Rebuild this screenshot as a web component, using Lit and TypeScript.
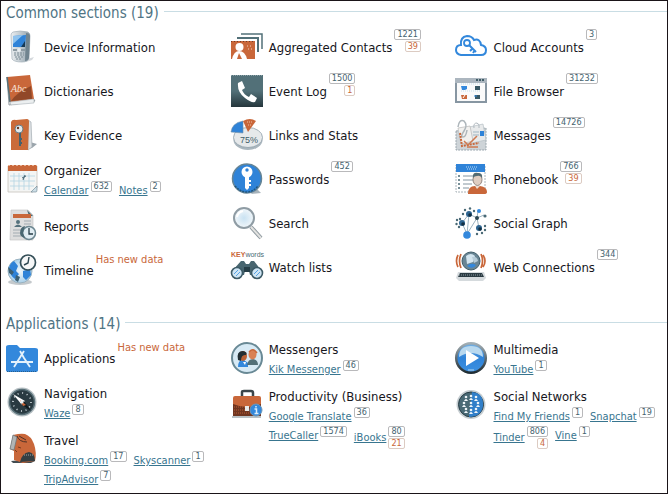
import { LitElement, html, svg, css, nothing } from "lit";
import { customElement } from "lit/decorators.js";

interface Counts {
  total?: string;
  fresh?: string;
}
interface AppLink extends Counts {
  name: string;
}
interface Entry extends Counts {
  icon: string;
  title: string;
  note?: string;
  links?: AppLink[];
}
interface Section {
  name: string;
  count: number;
  columns: Entry[][];
}

const icons: Record<string, unknown> = {
  device: svg`
    <path d="M18 29 L28 26 L26 29 L20 31 Z" fill="#d5d9dd"/>
    <path d="M7 1 Q14 -1 22 1 Q24 2 24 5 L23 27 Q22 31 16 31 Q8 31 6 28 L5 4 Q5 2 7 1Z" fill="url(#steel)" stroke="#a3b0b9" stroke-width=".7"/>
    <path d="M20 2 Q24 2 24 5 L23 27 Q22 30 19 30Z" fill="#70848f"/>
    <path d="M7 5 L20 4 L19 16 L7 16Z" fill="#2f83d8"/>
    <path d="M7 5 L17 4 L7 13Z" fill="#8fc3ee"/>
    <path d="M15 16 L19 10 L19 16Z" fill="#173a55"/>
    <path d="M7 18 H19 V20 H7Z" fill="#8d9ba3"/><circle cx="13" cy="19" r="2" fill="#e8edf0"/>
    <path d="M8 22 H18 M8 24 H18 M9 26 H17 M10 28 H16" stroke="#7b8b94" stroke-dasharray="2 1"/>`,
  dictionary: svg`
    <path d="M1 2 L3 30 L29 26 L26 22Z" fill="#e6e6e6" stroke="#9aa0a5"/>
    <path d="M1 2 L24 0 L28 24 L4 27Z" fill="#c9673a"/>
    <path d="M25 11 L26 24 L5 26 Q10 18 25 11Z" fill="#6d331d" opacity=".6"/>
    <path d="M1 2 L4 27" stroke="#567078" stroke-width="1.500"/>
    <path d="M4 27 L28 24 L28 28 L5 30Z" fill="#eceff0" stroke="#9ba5aa" stroke-width=".5"/>
    <text x="5" y="17" class="abc">Abc</text>`,
  key: svg`
    <path d="M24 23 L31 25 L26 29 L22 30Z" fill="#9aa4ab"/>
    <path d="M22 1 L25 3 L26 28 L22 31Z" fill="#dde1e4" stroke="#a4acb2" stroke-width=".7"/>
    <path d="M5 3 Q6 0 10 1 L21 0 Q23 0 23 3 L22 31 H5Z" fill="#ca6b3a"/>
    <circle cx="13" cy="10" r="4" fill="#e2e8eb" stroke="#6a7d86"/><circle cx="12" cy="9" r="1.200" fill="#6a3a22"/>
    <path d="M14 14 V27 M14 20 H16 M14 24 H16" stroke="#45616d" stroke-width="2"/>`,
  calendar: svg`
    <path d="M2 3 H31 V25 L27 29 H2Z" fill="#f4f5f4" stroke="#c6c1bb" stroke-width=".8"/>
    <path d="M2 2 H31 V8 H2Z" fill="#c9673a"/><path d="M2 2.500 H31" stroke="#e9b193" stroke-dasharray="2 2"/>
    <path d="M4 13 H29 M4 18 H29 M4 23 H28 M8 10 V27 M13 10 V27 M18 10 V27 M23 10 V27" stroke="#b4d4e3" stroke-width=".8"/>
    <path d="M16 15 L20 13 M17 17 L19 12" stroke="#486673"/>
    <path d="M31 23 L25 29 H30 Q31 29 31 27Z" fill="#cfe0e8" stroke="#68828d" stroke-width=".6"/>`,
  report: svg`
    <path d="M5 0 H22 L27 5 V30 H4Z" fill="#dedede" stroke="#bfc0c1" stroke-width=".6"/>
    <path d="M21 0 L27 6 H23Z" fill="#4c6c74"/>
    <path d="M7 4 H25 V8 H7Z" fill="#c9673a"/>
    <circle cx="12" cy="12" r="2" fill="#55727d"/><path d="M8 17 Q12 12 16 17Z" fill="#55727d"/>
    <path d="M18 11 H25 M18 14 H25 M7 20 H15 M7 23 H14 M7 26 H15" stroke="#a2abb1"/>
    <circle cx="23" cy="23" r="6.500" fill="#e1edf3" stroke="#6d8791" stroke-width="1.500"/>
    <path d="M23 18 V24 H27" fill="none" stroke="#263d47" stroke-width="1.300"/>
    <path d="M14 23 Q14 17 19 16 L17 23 L19 28 Q14 27 14 23Z" fill="#4a6872"/>`,
  timeline: svg`
    <ellipse cx="14" cy="28" rx="12" ry="3" fill="#c4c9cc"/>
    <circle cx="14" cy="17" r="12" fill="url(#globe)" stroke="#9ab2c0"/>
    <path d="M3 14 Q4 9 8 7 L12 12 L10 17 L13 20 L9 25 Q4 22 3 14Z M17 17 L24 15 L25 21 L20 26 L17 23Z" fill="#2f83d8"/>
    <path d="M2 13 L8 18 L6 21 L3 19Z M10 21 L14 23 L12 28 L9 26Z" fill="#3d6073"/>
    <circle cx="22" cy="8.500" r="7.500" fill="#f6f7f7" stroke="#354f58" stroke-width="1.700"/>
    <path d="M23 3 L22 9 L18 11" fill="none" stroke="#2c4650" stroke-width="1.400"/>`,
  contacts: svg`
    <path d="M10 3 H31 V18" fill="none" stroke="#527078" stroke-width="1.500"/>
    <path d="M6 7 H27 V21" fill="none" stroke="#527078" stroke-width="2"/>
    <path d="M0 10 H24 V28 H0Z" fill="#c9673a"/><path d="M0 10.500 H24" stroke="#703c29" stroke-dasharray="1 2"/>
    <circle cx="8.500" cy="16" r="4" fill="#fff"/><path d="M1 28 Q3 20 8 20 Q14 20 16 28Z" fill="#fff"/>
    <path d="M6 28 L8 22 L11 28Z" fill="#c9673a"/>
    <path d="M16 15 H22 M17 18 H22" stroke="#f1cdb9" stroke-dasharray="1 2"/>`,
  phone: svg`
    <path d="M0 0 H32 V32 H0Z" fill="url(#slate)"/><path d="M0 .5 H32" stroke="#8ca2a8" stroke-dasharray="1 1"/>
    <path d="M7 8 L11 6 L14 13 L11 15 Q13 20 18 22 L20 19 L26 23 L24 27 Q20 28 14 23 Q6 17 7 8Z" fill="#fff"/>`,
  stats: svg`
    <ellipse cx="17" cy="21" rx="14.500" ry="10" fill="#aab6be"/>
    <ellipse cx="17" cy="18.500" rx="14.500" ry="10" fill="#e6e9eb" stroke="#8fa0aa" stroke-width=".8"/>
    <path d="M12 14 L0 13 Q1 4 12 2Z" fill="#2f83d8" stroke="#7391a8" stroke-width=".6"/>
    <path d="M17 13 L12 2 Q19 -2 25 2Z" fill="#c9673a"/>
    <path d="M16 3 H22 M17 6 H21" stroke="#eec0a7" stroke-dasharray="1 1"/>
    <text x="9" y="24" class="percent">75%</text>`,
  password: svg`
    <path d="M25 25 L30 30 L20 31Z" fill="#a6b2ba"/>
    <circle cx="16" cy="15.500" r="14.500" fill="#2f83d8" stroke="#658495" stroke-width="1.500"/>
    <path d="M4 23 Q9 29 16 29 Q22 29 27 23" fill="none" stroke="#1f5680" stroke-width="1.500" stroke-dasharray="2 1"/>
    <circle cx="16" cy="9" r="5.500" fill="#fff"/><circle cx="16" cy="7" r="1.700" fill="#2f83d8"/>
    <path d="M14 13 H18 V25 L16 27 L14 25Z" fill="#fff"/><path d="M18 18 H20 M18 22 H20" stroke="#fff" stroke-width="2"/>`,
  search: svg`
    <path d="M20 20 L30 31" stroke="#8d989e" stroke-width="4"/><path d="M20 20 L30 31" stroke="#e2e2e0" stroke-width="2"/>
    <circle cx="13" cy="11" r="10" fill="url(#lens)" stroke="#8f9ca4" stroke-width="2"/>
    <path d="M6 10 Q7 5 12 4" fill="none" stroke="#fff" stroke-width="2"/>`,
  watch: svg`
    <text x="0" y="6" class="keyword"><tspan class="hot">KEY</tspan>words</text>
    <path d="M2 19 L10 10 L13 10 L15 13 H18 L20 10 H23 L30 19 V24 H19 L18 20 H14 L13 24 H2Z" fill="#486670"/>
    <path d="M13 16 H19 V21 H13Z" fill="#263e47"/>
    <circle cx="6" cy="22" r="5.500" fill="#cfe5f4" stroke="#3c5a66" stroke-width="1.600"/>
    <circle cx="26" cy="22" r="5.500" fill="#cfe5f4" stroke="#3c5a66" stroke-width="1.600"/>
    <path d="M3 23 L7 19 M5 25 L9 21 M23 23 L27 19 M25 25 L29 21" stroke="#55a2e4"/>`,
  cloud: svg`
    <path d="M6 24 Q1 23 1 19 Q1 14 6 14 Q5 6 12 5 Q17 5 19 9 Q25 7 26 14 Q31 15 31 19 Q31 24 26 24Z" fill="#fff" stroke="#3388dc" stroke-width="2"/>
    <circle cx="12" cy="12" r="3" fill="none" stroke="#3388dc" stroke-width="1.800"/>
    <path d="M14 14 L21 21 M17 18 L15 20 M20 19 L18 22" stroke="#3388dc" stroke-width="2"/>`,
  browser: svg`
    <path d="M0 3 H32 V28 H0Z" fill="#8796a2"/><path d="M0 3 H32 V8 H0Z" fill="#acb6bf"/>
    <path d="M21 5 H30" stroke="#3f5c66" stroke-width="2" stroke-dasharray="2 1"/>
    <path d="M2 8 H30 V26 H2Z" fill="#fafafa"/><path d="M6 9 H26 M6 16 H26" stroke="#c5dfeb" stroke-dasharray="1 1"/>
    <path d="M6 11 H12 V14 L10 15 H7Z" fill="#3388dc"/><path d="M20 11 H25 V15 H20Z M20 20 H25 V24 H20Z" fill="#395864"/>
    <path d="M6 20 H12 V24 H7Z" fill="#c9673a"/><path d="M8 23 L10 20" stroke="#fff"/><path d="M19 21 H22" stroke="#3388dc"/>`,
  messages: svg`
    <path d="M1 12 L31 9 V31 H1Z" fill="#ced4d8" stroke="#9aa6ad" stroke-dasharray="2 1"/>
    <path d="M10 9 L28 5 L31 21 L12 25Z" fill="#e8eaeb" stroke="#b6c0c6" stroke-width=".7"/>
    <path d="M3 9 L15 7 L18 22 L6 25Z" fill="#f2f1ef" stroke="#b8b8b7" stroke-width=".7"/>
    <path d="M3 8 Q4 0 9 2 Q13 6 9 12 Q5 18 8 18 Q11 18 12 11" fill="none" stroke="#aeb6bb" stroke-width="1.500"/>
    <path d="M19 9 Q18 4 22 4 Q25 5 24 9" fill="none" stroke="#b0b8be"/>
    <path d="M5 14 L7 27 L24 24" fill="none" stroke="#c9673a" stroke-width="2" stroke-dasharray="2 1"/>
    <path d="M9 22 L13 26 L22 17 M12 28 H23" fill="none" stroke="#ce7950" stroke-width="1.500"/>
    <path d="M25 12 H29 V17 H25Z" fill="#2f83d8"/><path d="M18 13 H24 M18 16 H24" stroke="#9fb5c2"/>`,
  phonebook: svg`
    <path d="M1 2 H30 V29 H1Z" fill="#fff" stroke="#aab4ba" stroke-dasharray="2 1"/>
    <path d="M1 1 H30 V9 H1Z" fill="#2f83d8"/><path d="M11 4 H23 M12 6 H22" stroke="#bddcf3" stroke-dasharray="1 1"/>
    <path d="M3 13 H5 M3 17 H5 M3 21 H5 M3 25 H5" stroke="#4b6b75" stroke-width="1.500"/>
    <path d="M8 13 H19 M8 17 H18 M8 21 H17 M8 25 H14" stroke="#8495a1"/>
    <path d="M13 31 Q13 23 20 23 H25 Q32 24 32 29 Q32 31 29 31Z" fill="#c9673a"/>
    <ellipse cx="22.500" cy="16.500" rx="4.500" ry="6" fill="#dfcdc2" stroke="#7b6d67" stroke-width=".8"/>
    <path d="M18 15 Q17 9 23 10 Q28 10 27 15 Q25 12 22 13 Q19 13 18 15Z" fill="#536b73"/><path d="M20 23 L22 26 L25 23Z" fill="#efdcd0"/>`,
  graph: svg`
    <path d="M14 7 L22 11 L29 8 M22 11 L24 21 M22 11 L12 27 M14 7 L12 27 M14 7 L7 16 L12 27 M22 11 L23 4" fill="none" stroke="#9db3c0"/>
    <circle cx="14" cy="7" r="3" fill="#2e6591"/><circle cx="7" cy="16" r="3" fill="#2e6591"/><circle cx="24" cy="21" r="3" fill="#2e6591"/>
    <circle cx="15" cy="8" r="1.800" fill="#132f42"/><circle cx="8" cy="17" r="1.800" fill="#132f42"/><circle cx="25" cy="22" r="1.800" fill="#132f42"/>
    <circle cx="12" cy="28" r="3.800" fill="#3388dc"/><circle cx="22" cy="11" r="2" fill="#2b4651"/><circle cx="24" cy="4" r="2" fill="#3388dc"/>
    <g fill="#496975"><circle cx="8" cy="7" r="1.200"/><circle cx="10" cy="3" r="1.200"/><circle cx="15" cy="1.500" r="1.200"/><circle cx="19" cy="4" r="1.200"/><circle cx="2" cy="13" r="1.200"/><circle cx="1.500" cy="17" r="1.200"/><circle cx="4" cy="20" r="1.200"/><circle cx="30" cy="9" r="1.600"/><circle cx="30" cy="19" r="1.200"/><circle cx="30" cy="23" r="1.200"/><circle cx="22" cy="27" r="1.200"/><circle cx="27" cy="26" r="1.200"/><circle cx="5" cy="12" r="1.200"/></g>`,
  web: svg`
    <path d="M3 21 H29 L31 27 L28 30 H4 L1 27Z" fill="#d5dadd"/>
    <path d="M5 22 H27 L29 26 H3Z" fill="#2b3b42"/><path d="M4 24 H28" stroke="#8e9da5" stroke-dasharray="1 1"/>
    <circle cx="16" cy="10" r="9" fill="#688594" stroke="#405e6a"/>
    <path d="M11 5 Q16 1 20 5 L18 11 L12 13Z" fill="#d3e5ef"/><path d="M12 15 Q16 11 21 14 Q18 19 12 15Z" fill="#3388dc"/>
    <path d="M17 6 Q22 5 23 10 L19 12Z" fill="#b6ccd8"/>
    <path d="M6 3 Q3 10 6 17 M3 4 Q0 10 3 16 M26 3 Q29 10 26 17 M28 4 Q32 10 28 16" fill="none" stroke="#c9673a" stroke-width="1.700"/>`,
  folder: svg`
    <path d="M0 5 Q0 3 3 3 H11 L14 6 H29 Q32 6 32 8 V28 Q32 30 29 30 H3 Q0 30 0 28Z" fill="#3388dc"/>
    <path d="M1 29.500 H31" stroke="#28608f" stroke-dasharray="1 1"/>
    <path d="M14 9 L18 16 L24 25 M18 9 L8 25 M5 20 H27" fill="none" stroke="#e4f2fc" stroke-width="1.800"/>`,
  compass: svg`
    <circle cx="16" cy="16" r="14.500" fill="#b7c0c4"/><circle cx="16" cy="16" r="12.500" fill="#293a41" stroke="#576e76" stroke-width="1.500"/>
    <circle cx="16" cy="16" r="9" fill="none" stroke="#dfe8ec" stroke-width="1.500" stroke-dasharray="1 3.700"/>
    <path d="M7 8 L19 15 L16 19Z" fill="#fff"/><path d="M25 25 L18 15 L15 18Z" fill="#10191d"/>
    <path d="M14 14 L20 19 L17 20Z" fill="#c9673a"/><circle cx="16" cy="16" r="1.500" fill="#e8eff2"/>`,
  backpack: svg`
    <path d="M5 28 L17 27 L29 28 L25 30 H7Z" fill="#424d52"/>
    <path d="M7 2 Q15 0 19 1 Q25 3 28 11 Q31 20 29 28 L17 30 L8 27 L8 18 L4 16Z" fill="#c9673a"/>
    <path d="M7 2 L11 4 L8 17 L4 16Z" fill="#b1b4b5" stroke="#65767c" stroke-width=".7"/>
    <path d="M11 3 Q13 9 21 9 M13 3 L20 7" fill="none" stroke="#4d3026"/>
    <path d="M14 29 Q16 20 23 19 Q29 20 29 28Z" fill="#343f43"/><path d="M18 22 H27" stroke="#a3a6a5" stroke-dasharray="1 1"/>
    <path d="M9 17 L11 19 M12 14 L15 15" stroke="#793b21"/>`,
  messengers: svg`
    <circle cx="16" cy="16" r="15" fill="#d7eaf5" stroke="#698995" stroke-width="2"/>
    <path d="M7 25 Q7 17 13 18 L17 21 V25Z" fill="#3388dc"/><path d="M16 23 Q17 17 22 17 Q27 18 27 23Z" fill="#527078"/>
    <ellipse cx="12" cy="14" rx="4" ry="5" fill="#b96136"/><path d="M7 18 Q5 9 12 9 Q17 10 15 13 Q10 12 10 19Z" fill="#222f34"/>
    <ellipse cx="21.500" cy="12.500" rx="4" ry="5" fill="#d98155"/><path d="M18 10 Q22 5 26 11" fill="none" stroke="#c9673a" stroke-width="1.500"/>
    <path d="M12 20 L14 23 L15 20" fill="#fff"/>`,
  briefcase: svg`
    <path d="M1 27 H30 V29 H1Z" fill="#b9c1c5"/><path d="M11 7 V3 Q11 2 13 2 H20 Q22 2 22 4 V7" fill="none" stroke="#3b4549" stroke-width="2.500"/>
    <path d="M2 9 Q2 7 4 7 H28 Q30 7 30 9 V27 H2Z" fill="#c9673a"/><path d="M2 15 Q16 21 30 15 V27 H2Z" fill="#6f3520"/>
    <path d="M3 18 H29 M3 21 H29 M3 24 H29" stroke="#b75d34" stroke-dasharray="1 1"/>
    <path d="M14 17 H18 V22 H14Z" fill="#e7e9e9"/><circle cx="25" cy="21" r="6" fill="#3388dc" stroke="#6f98b8"/>
    <path d="M25 17 V18.500 M23.500 20 H25.500 V24 M23.500 24.500 H27.500" fill="none" stroke="#d9ecfa" stroke-width="1.500"/>`,
  multimedia: svg`
    <circle cx="16" cy="16" r="14.800" fill="url(#play)" stroke="url(#rim)" stroke-width="2.500"/>
    <path d="M4 15 Q4 4 16 4 Q28 4 28 15 Q16 7 4 15Z" fill="#b9d9ef"/>
    <path d="M11 8 L24 16 L11 24Z" fill="#fff"/><path d="M13 28 H19" stroke="#b5d6ee"/>`,
  social: svg`
    <circle cx="16" cy="15.500" r="14.500" fill="#c5cdd1"/><circle cx="16" cy="15.500" r="12.500" fill="#496975" stroke="#293d45"/>
    <path d="M17 3 Q29 4 28 17 Q26 28 14 28Z" fill="#317fc9"/>
    <g fill="#eef5f9">${[
      [11, 8], [16, 7], [21, 8],
      [9, 14], [16, 14], [23, 14],
      [11, 20], [16, 21], [21, 20],
    ].map(([x, y]) => svg`<circle cx=${x} cy=${y} r="1.300"/><path d="M${x - 2} ${y + 4} Q${x} ${y} ${x + 2} ${y + 4}Z"/>`)}</g>`,
};

const sections: Section[] = [
  {
    name: "Common sections",
    count: 19,
    columns: [
      [
        { icon: "device", title: "Device Information" },
        { icon: "dictionary", title: "Dictionaries" },
        { icon: "key", title: "Key Evidence" },
        {
          icon: "calendar",
          title: "Organizer",
          links: [{ name: "Calendar", total: "632" }, { name: "Notes", total: "2" }],
        },
        { icon: "report", title: "Reports" },
        { icon: "timeline", title: "Timeline", note: "Has new data" },
      ],
      [
        { icon: "contacts", title: "Aggregated Contacts", total: "1221", fresh: "39" },
        { icon: "phone", title: "Event Log", total: "1500", fresh: "1" },
        { icon: "stats", title: "Links and Stats" },
        { icon: "password", title: "Passwords", total: "452" },
        { icon: "search", title: "Search" },
        { icon: "watch", title: "Watch lists" },
      ],
      [
        { icon: "cloud", title: "Cloud Accounts", total: "3" },
        { icon: "browser", title: "File Browser", total: "31232" },
        { icon: "messages", title: "Messages", total: "14726" },
        { icon: "phonebook", title: "Phonebook", total: "766", fresh: "39" },
        { icon: "graph", title: "Social Graph" },
        { icon: "web", title: "Web Connections", total: "344" },
      ],
    ],
  },
  {
    name: "Applications",
    count: 14,
    columns: [
      [
        { icon: "folder", title: "Applications", note: "Has new data" },
        { icon: "compass", title: "Navigation", links: [{ name: "Waze", total: "8" }] },
        {
          icon: "backpack",
          title: "Travel",
          links: [
            { name: "Booking.com", total: "17" },
            { name: "Skyscanner", total: "1" },
            { name: "TripAdvisor", total: "7" },
          ],
        },
      ],
      [
        { icon: "messengers", title: "Messengers", links: [{ name: "Kik Messenger", total: "46" }] },
        {
          icon: "briefcase",
          title: "Productivity (Business)",
          links: [
            { name: "Google Translate", total: "36" },
            { name: "TrueCaller", total: "1574" },
            { name: "iBooks", total: "80", fresh: "21" },
          ],
        },
      ],
      [
        { icon: "multimedia", title: "Multimedia", links: [{ name: "YouTube", total: "1" }] },
        {
          icon: "social",
          title: "Social Networks",
          links: [
            { name: "Find My Friends", total: "1" },
            { name: "Snapchat", total: "19" },
            { name: "Tinder", total: "806", fresh: "4" },
            { name: "Vine", total: "1" },
          ],
        },
      ],
    ],
  },
];

@customElement("app-root")
export class AppRoot extends LitElement {
  static styles = css`
    :host {
      display: block;
      font-family: "DejaVu Sans Condensed", "DejaVu Sans", sans-serif;
      color: #16161c;
    }
    .page {
      box-sizing: border-box;
      min-height: 100vh;
      border: 1px solid #1a1418;
      padding-left: 5px;
      background: #fff;
    }
    .defs {
      position: absolute;
      width: 0;
      height: 0;
    }
    .section {
      padding-bottom: 20px;
    }
    .section:last-child {
      padding-bottom: 0;
    }
    .heading {
      display: flex;
      align-items: center;
      gap: 5px;
      height: 24px;
      margin: 0;
      font-size: 15px;
      font-weight: 400;
      line-height: 24px;
      white-space: nowrap;
      color: #4f7484;
    }
    .heading::after {
      content: "";
      flex: 1;
      height: 1px;
      margin-bottom: 3px;
      background: #c9dde4;
    }
    .columns {
      display: grid;
      grid-template-columns: 34% 34% 1fr;
    }
    .column {
      margin: 0;
      padding: 0 8px 0 0;
      list-style: none;
    }
    .entry {
      display: flex;
      gap: 6px;
      min-height: 44px;
    }
    .icon {
      flex: none;
      width: 32px;
      height: 32px;
      margin-top: 6px;
      overflow: visible;
    }
    .title-row {
      display: flex;
      gap: 2px;
    }
    .title {
      margin: 0;
      padding-top: 2px;
      font-size: 13px;
      font-weight: 400;
      line-height: 42px;
      white-space: nowrap;
    }
    .with-links .title {
      padding-top: 4px;
      line-height: 20px;
    }
    .title-row .counts {
      margin-top: 4px;
    }
    .note {
      padding-top: 4px;
      font-size: 11px;
      line-height: 16px;
      white-space: nowrap;
      color: #c9673a;
    }
    .links {
      display: flex;
      flex-wrap: wrap;
      column-gap: 7px;
      margin: 0;
      padding: 0 0 4px;
      list-style: none;
    }
    .link-item {
      display: flex;
      align-items: flex-start;
      gap: 2px;
      min-height: 19px;
    }
    .link {
      font-size: 11px;
      line-height: 19px;
      white-space: nowrap;
      color: #38758f;
    }
    .tall .link {
      line-height: 23px;
    }
    .counts {
      display: flex;
      flex-direction: column;
      align-items: flex-end;
      gap: 1px;
    }
    .count {
      box-sizing: border-box;
      height: 11px;
      padding: 0 2px;
      border: 1px solid #b9b9bb;
      border-radius: 2px;
      font-size: 9px;
      line-height: 9px;
      color: #45636f;
    }
    .count.fresh {
      border-color: #dccbc2;
      color: #c9673a;
    }
    .abc {
      font: italic 10px "Liberation Serif", serif;
      fill: #f8e2d5;
    }
    .percent {
      font: 9px "Liberation Sans", sans-serif;
      fill: #3e5d69;
    }
    .keyword {
      font: 7px "Liberation Sans", sans-serif;
      fill: #496a76;
    }
    .hot {
      font-weight: 700;
      fill: #c9673a;
    }
  `;

  private counts({ total, fresh }: Counts) {
    if (!total) return nothing;
    return html`<span class="counts"
      ><span class="count">${total}</span>${fresh ? html`<span class="count fresh">${fresh}</span>` : nothing}</span
    >`;
  }

  private links(items: AppLink[]) {
    return html`<ul class="links">
      ${items.map(
        (l) => html`<li class="link-item ${l.fresh ? "tall" : ""}">
          <a class="link" href="#">${l.name}</a>${this.counts(l)}
        </li>`
      )}
    </ul>`;
  }

  private entry(e: Entry) {
    return html`<li class="entry ${e.links ? "with-links" : ""}">
      <svg class="icon" viewBox="0 0 32 32" aria-hidden="true">${icons[e.icon]}</svg>
      <div>
        <div class="title-row">
          <h3 class="title">${e.title}</h3>
          ${this.counts(e)} ${e.note ? html`<span class="note">${e.note}</span>` : nothing}
        </div>
        ${e.links ? this.links(e.links) : nothing}
      </div>
    </li>`;
  }

  render() {
    return html`<main class="page">
      <svg class="defs" aria-hidden="true">
        <linearGradient id="steel"><stop stop-color="#eceff1" /><stop offset="1" stop-color="#93a3ad" /></linearGradient>
        <linearGradient id="slate" x2="0" y2="1"><stop offset=".5" stop-color="#527078" /><stop offset="1" stop-color="#25363c" /></linearGradient>
        <linearGradient id="play" x2="0" y2="1"><stop stop-color="#7ab2e0" /><stop offset=".5" stop-color="#2f83d8" /><stop offset="1" stop-color="#3c91e2" /></linearGradient>
        <linearGradient id="rim" x2="0" y2="1"><stop stop-color="#a3afb5" /><stop offset="1" stop-color="#1f2c33" /></linearGradient>
        <radialGradient id="globe"><stop stop-color="#f2f8fb" /><stop offset="1" stop-color="#a9d0ea" /></radialGradient>
        <radialGradient id="lens"><stop stop-color="#c9e2f2" /><stop offset="1" stop-color="#f2f7fa" /></radialGradient>
      </svg>
      ${sections.map(
        (s) => html`<section class="section">
          <h2 class="heading">${s.name} (${s.count})</h2>
          <div class="columns">
            ${s.columns.map((c) => html`<ul class="column">${c.map((e) => this.entry(e))}</ul>`)}
          </div>
        </section>`
      )}
    </main>`;
  }
}
